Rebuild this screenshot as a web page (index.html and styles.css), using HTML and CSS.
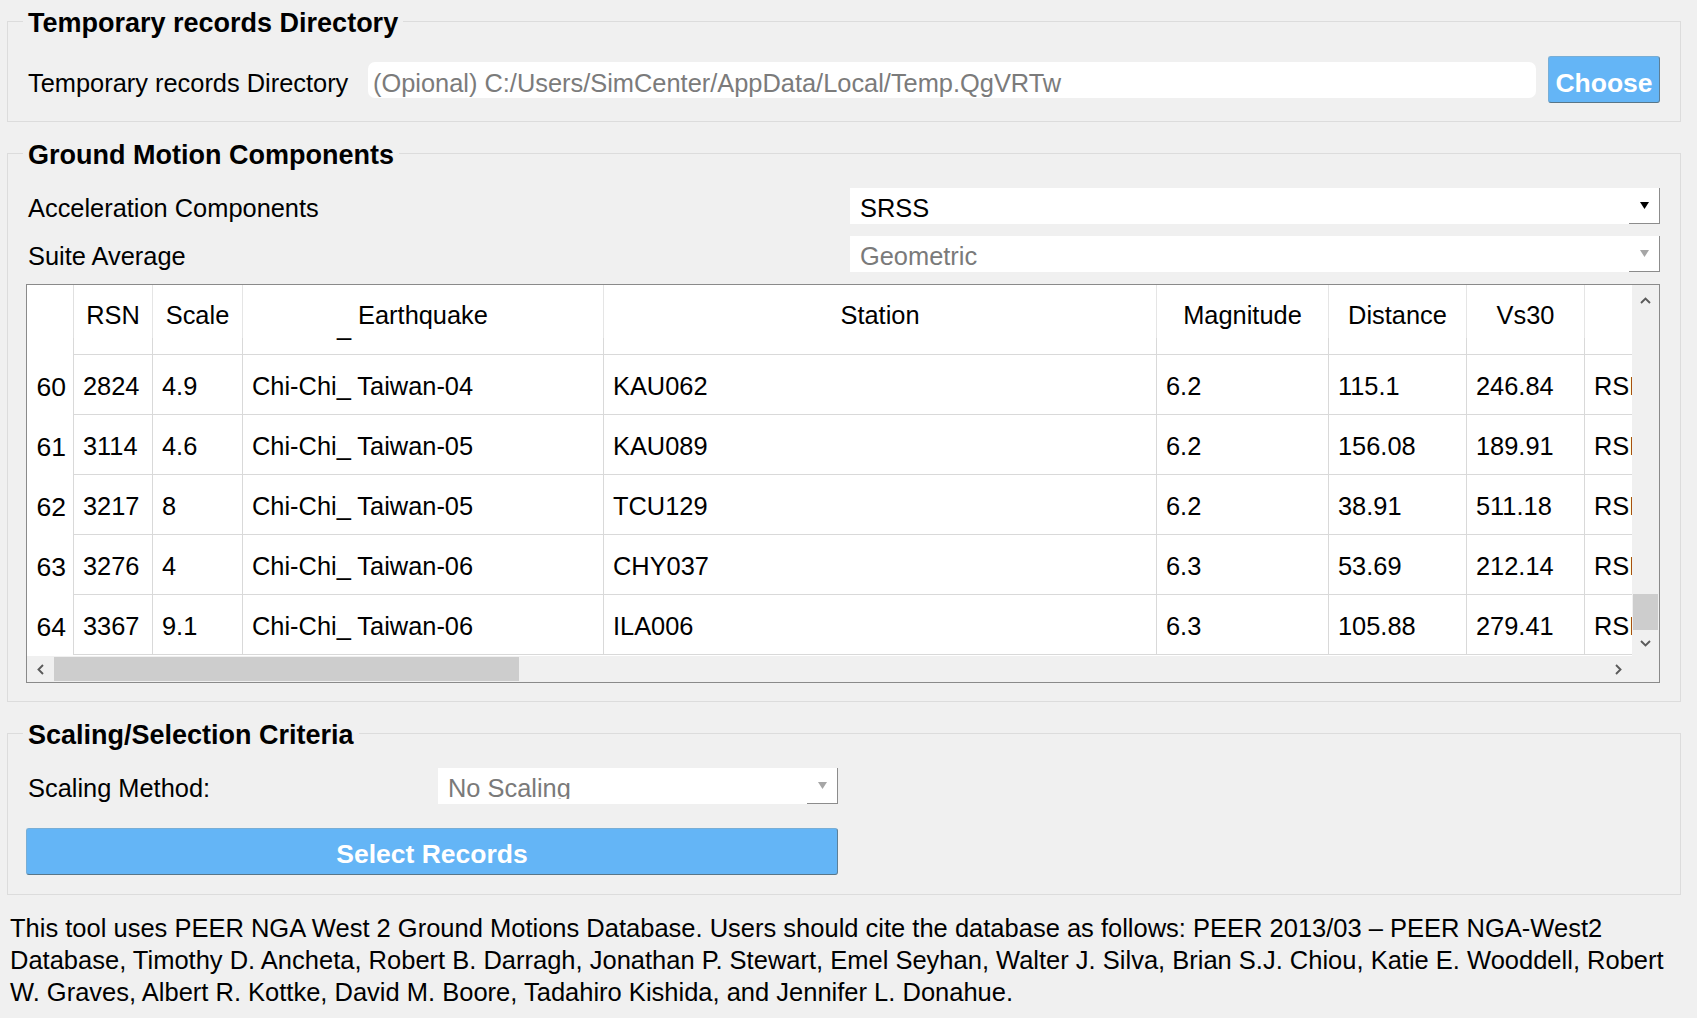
FILE: index.html
```html
<!DOCTYPE html>
<html lang="en">
<head>
<meta charset="utf-8">
<title>PEER NGA West 2 record selection</title>
<link rel="stylesheet" href="styles.css">
</head>
<body>
<div class="page">

  <fieldset class="group">
    <legend class="group-title">Temporary records Directory</legend>
    <div class="dir-row">
      <span class="label dir-label">Temporary records Directory</span>
      <div class="line-edit"><span class="placeholder">(Opional) C:/Users/SimCenter/AppData/Local/Temp.QgVRTw</span></div>
      <button class="btn btn-choose" type="button">Choose</button>
    </div>
  </fieldset>

  <fieldset class="group">
    <legend class="group-title">Ground Motion Components</legend>
    <div class="stack">
      <div class="form-row">
        <span class="label">Acceleration Components</span>
        <div class="combo">
          <span class="combo-value">SRSS</span>
          <span class="combo-btn"><svg width="9" height="7" viewBox="0 0 9 7"><polygon points="0,0 9,0 4.5,7" fill="#000"/></svg></span>
        </div>
      </div>
      <div class="form-row">
        <span class="label">Suite Average</span>
        <div class="combo combo-disabled">
          <span class="combo-value">Geometric</span>
          <span class="combo-btn"><svg width="9" height="7" viewBox="0 0 9 7"><polygon points="0,0 9,0 4.5,7" fill="#a6a6a6"/></svg></span>
        </div>
      </div>

      <div class="table">
        <div class="table-view">
          <div class="thead">
            <div class="th th-corner"></div>
            <div class="th">RSN</div>
            <div class="th">Scale</div>
            <div class="th">Earthquake</div>
            <div class="th">Station</div>
            <div class="th">Magnitude</div>
            <div class="th">Distance</div>
            <div class="th">Vs30</div>
            <div class="th th-last"></div>
          </div>
          <div class="tbody">
            <div class="tr tr-partial">
              <div class="rh"></div>
              <div class="td"></div>
              <div class="td"></div>
              <div class="td td-underscore">_</div>
              <div class="td"></div>
              <div class="td"></div>
              <div class="td"></div>
              <div class="td"></div>
              <div class="td"></div>
            </div>
            <div class="tr">
              <div class="rh">60</div>
              <div class="td">2824</div>
              <div class="td">4.9</div>
              <div class="td">Chi-Chi_ Taiwan-04</div>
              <div class="td">KAU062</div>
              <div class="td">6.2</div>
              <div class="td">115.1</div>
              <div class="td">246.84</div>
              <div class="td">RSN</div>
            </div>
            <div class="tr">
              <div class="rh">61</div>
              <div class="td">3114</div>
              <div class="td">4.6</div>
              <div class="td">Chi-Chi_ Taiwan-05</div>
              <div class="td">KAU089</div>
              <div class="td">6.2</div>
              <div class="td">156.08</div>
              <div class="td">189.91</div>
              <div class="td">RSN</div>
            </div>
            <div class="tr">
              <div class="rh">62</div>
              <div class="td">3217</div>
              <div class="td">8</div>
              <div class="td">Chi-Chi_ Taiwan-05</div>
              <div class="td">TCU129</div>
              <div class="td">6.2</div>
              <div class="td">38.91</div>
              <div class="td">511.18</div>
              <div class="td">RSN</div>
            </div>
            <div class="tr">
              <div class="rh">63</div>
              <div class="td">3276</div>
              <div class="td">4</div>
              <div class="td">Chi-Chi_ Taiwan-06</div>
              <div class="td">CHY037</div>
              <div class="td">6.3</div>
              <div class="td">53.69</div>
              <div class="td">212.14</div>
              <div class="td">RSN</div>
            </div>
            <div class="tr">
              <div class="rh">64</div>
              <div class="td">3367</div>
              <div class="td">9.1</div>
              <div class="td">Chi-Chi_ Taiwan-06</div>
              <div class="td">ILA006</div>
              <div class="td">6.3</div>
              <div class="td">105.88</div>
              <div class="td">279.41</div>
              <div class="td">RSN</div>
            </div>
          </div>
        </div>

        <div class="vscroll">
          <div class="sb-btn sb-up"><svg width="11" height="7" viewBox="0 0 11 7"><polyline points="1,6 5.5,1.5 10,6" fill="none" stroke="#5a5a5a" stroke-width="1.9"/></svg></div>
          <div class="sb-track-v"><div class="sb-thumb-v"></div></div>
          <div class="sb-btn sb-down"><svg width="11" height="7" viewBox="0 0 11 7"><polyline points="1,1 5.5,5.5 10,1" fill="none" stroke="#5a5a5a" stroke-width="1.9"/></svg></div>
        </div>

        <div class="hscroll">
          <div class="sb-btn sb-left"><svg width="7" height="11" viewBox="0 0 7 11"><polyline points="6,1 1.5,5.5 6,10" fill="none" stroke="#5a5a5a" stroke-width="1.9"/></svg></div>
          <div class="sb-track-h"><div class="sb-thumb-h"></div></div>
          <div class="sb-btn sb-right"><svg width="7" height="11" viewBox="0 0 7 11"><polyline points="1,1 5.5,5.5 1,10" fill="none" stroke="#5a5a5a" stroke-width="1.9"/></svg></div>
        </div>

        <div class="sb-corner"></div>
      </div>
    </div>
  </fieldset>

  <fieldset class="group group-last">
    <legend class="group-title">Scaling/Selection Criteria</legend>
    <div class="scaling-grid">
      <span class="label">Scaling Method:</span>
      <div class="combo combo-disabled">
        <span class="combo-value combo-value-clipped">No Scaling</span>
        <span class="combo-btn"><svg width="9" height="7" viewBox="0 0 9 7"><polygon points="0,0 9,0 4.5,7" fill="#a6a6a6"/></svg></span>
      </div>
      <button class="btn btn-select" type="button">Select Records</button>
    </div>
  </fieldset>

  <p class="note">This tool uses PEER NGA West 2 Ground Motions Database. Users should cite the database as follows: PEER 2013/03 – PEER NGA-West2<br>Database, Timothy D. Ancheta, Robert B. Darragh, Jonathan P. Stewart, Emel Seyhan, Walter J. Silva, Brian S.J. Chiou, Katie E. Wooddell, Robert<br>W. Graves, Albert R. Kottke, David M. Boore, Tadahiro Kishida, and Jennifer L. Donahue.</p>

</div>
</body>
</html>
```

FILE: styles.css
```css
* {
  box-sizing: border-box;
}

html,
body {
  margin: 0;
  padding: 0;
}

body {
  background: #f0f0f0;
  color: #000;
  font-family: "Liberation Sans", Arial, sans-serif;
  font-size: 25.4px;
}

.page {
  padding: 4px 16px 0 7px;
}

/* ---------- group boxes ---------- */
.group {
  margin: 0 0 14px 0;
  padding: 18px 20px 18px 18px;
  border: 1px solid #dcdcdc;
  min-width: 0;
}

.group-last {
  margin-bottom: 0;
  padding-bottom: 19px;
}

.group-title {
  margin-left: -3px;
  padding: 5px 5px 0 5px;
  font-size: 27px;
  font-weight: bold;
  line-height: 29px;
}

.label {
  padding-left: 2px;
  white-space: nowrap;
}

/* ---------- directory row ---------- */
.dir-row {
  display: flex;
  align-items: baseline;
}

.dir-label {
  flex: none;
  width: 342px;
}

.line-edit {
  flex: 1;
  min-width: 0;
  height: 36px;
  margin-right: 12px;
  padding: 7px 0 0 5px;
  line-height: 28px;
  background: #fff;
  border-radius: 7px;
  white-space: nowrap;
  overflow: hidden;
}

.placeholder {
  color: #7b7b7b;
}

/* ---------- buttons ---------- */
.btn {
  font-family: "Liberation Sans", Arial, sans-serif;
  font-weight: bold;
  font-size: 26.5px;
  color: #fff;
  background: #64b5f6;
  border: 1px solid #78aed6;
  border-right-color: #5d7f96;
  border-bottom-color: #587689;
  border-radius: 3px;
  margin: 0;
  white-space: nowrap;
  text-align: center;
}

.btn-choose {
  flex: none;
  width: 112px;
  height: 47px;
  padding: 7px 0 0 0;
  line-height: 38px;
}

.btn-select {
  grid-column: 1 / -1;
  align-self: start;
  width: 812px;
  height: 47px;
  padding: 6px 0 0 0;
  line-height: 39px;
}

/* ---------- combo boxes ---------- */
.stack {
  display: flex;
  flex-direction: column;
  gap: 12px;
}

.form-row {
  display: grid;
  grid-template-columns: 1fr 810px;
  align-items: baseline;
}

.combo {
  display: flex;
  height: 36px;
  background: #fff;
}

.combo-value {
  flex: 1;
  height: 36px;
  padding: 6px 0 0 10px;
  line-height: 28px;
  white-space: nowrap;
  overflow: hidden;
}

.combo-value-clipped {
  height: 31px;
}

.combo-disabled .combo-value {
  color: #7a7a7a;
}

.combo-btn {
  flex: none;
  width: 31px;
  height: 36px;
  display: flex;
  align-items: center;
  justify-content: center;
  border-right: 1px solid #8c8c8c;
  border-bottom: 1px solid #8c8c8c;
}

.scaling-grid {
  display: grid;
  grid-template-columns: 412px 400px;
  row-gap: 24px;
  align-items: baseline;
}

/* ---------- table ---------- */
.table {
  display: grid;
  grid-template-columns: 1605px 27px;
  grid-template-rows: 371px 26px;
  width: 1634px;
  border: 1px solid #8a8a8a;
  background: #fff;
}

.table-view {
  overflow: hidden;
  background: #fff;
}

.thead,
.tr {
  display: grid;
  grid-template-columns: 47px 79px 90px 361px 553px 172px 138px 118px 200px;
  width: max-content;
}

.thead {
  height: 53px;
}

.th {
  border-right: 1px solid #e5e5e5;
  padding-top: 7px;
  line-height: 46px;
  text-align: center;
  white-space: nowrap;
  overflow: hidden;
}

.th-corner {
  border-right-color: #e0e0e0;
}

.th-last {
  border-right: none;
}

.tbody {
  height: 318px;
  overflow: hidden;
}

.tr {
  height: 60px;
}

.tr-partial {
  margin-top: -43px;
}

.rh {
  border-right: 1px solid #d9d9d9;
  padding: 5px 7px 0 0;
  font-size: 26.5px;
  line-height: 55px;
  text-align: right;
  white-space: nowrap;
  overflow: hidden;
}

.td {
  border-right: 1px solid #d9d9d9;
  border-bottom: 1px solid #d9d9d9;
  padding: 4px 0 0 9px;
  line-height: 55px;
  white-space: nowrap;
  overflow: hidden;
}

.td-underscore {
  padding-left: 94px;
}

/* ---------- scroll bars ---------- */
.vscroll {
  display: flex;
  flex-direction: column;
  background: #f0f0f0;
}

.sb-btn {
  flex: none;
  display: flex;
  align-items: center;
  justify-content: center;
}

.sb-up {
  height: 30px;
}

.sb-down {
  height: 26px;
}

.sb-track-v {
  flex: 1;
  display: flex;
  flex-direction: column;
  justify-content: flex-end;
}

.sb-thumb-v {
  height: 36px;
  margin: 0 1px;
  background: #cdcdcd;
}

.hscroll {
  display: flex;
  background: #f0f0f0;
}

.sb-left,
.sb-right {
  width: 27px;
}

.sb-track-h {
  flex: 1;
  display: flex;
  align-items: center;
}

.sb-thumb-h {
  width: 465px;
  height: 24px;
  background: #cdcdcd;
}

.sb-corner {
  background: #f0f0f0;
}

/* ---------- citation note ---------- */
.note {
  margin: 17px 0 0 3px;
  font-size: 25.5px;
  line-height: 32px;
  white-space: nowrap;
}
```
